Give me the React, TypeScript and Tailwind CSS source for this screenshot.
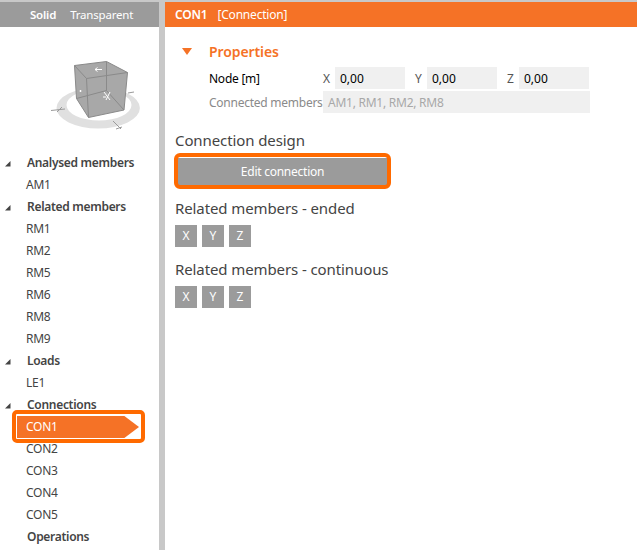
const font = "[font-family:'Noto_Sans','Open_Sans',sans-serif]";

function Cube() {
  return (
    <svg width="170" height="110" viewBox="0 30 170 110" className="block shrink-0">
      <path fillRule="evenodd" fill="#e0e0e0" d="M56.500 108a41.700 20.500 0 1 0 83.400 0a41.700 20.500 0 1 0 -83.400 0zM66.500 105a32.500 15.500 0 1 1 65 0a32.500 15.500 0 1 1 -65 0z" />
      <g stroke="#9a9a9a" strokeWidth="1" fill="none">
        <path d="M51 110.500 L65 109 M62 107 L57 112" />
        <path d="M113 121 L121 129 M116 129 L122 127" />
        <path d="M128 93 L134 92" />
      </g>
      <path d="M74.500 65.500 L106.500 61.500 L127.500 72.500 L124 110 L88.500 117.500 L76.500 98.500 Z" fill="#a8a8a8" stroke="#8a8a8a" strokeWidth="1" />
      <path d="M74.500 65.500 L86.500 78.500 L127.500 72.500 M86.500 78.500 L88.500 117.500 M76.500 98.500 L106.500 90.500 L124 110 M106.500 61.500 L106.500 90.500" fill="none" stroke="#8a8a8a" strokeWidth="1" />
      <path d="M95 69.500 L102 69.500 M95 69.500 L97.500 67.500 M95 69.500 L97.500 71.500" stroke="#fff" strokeWidth="1" fill="none" />
      <path d="M80.500 90 L80.500 92" stroke="#fff" strokeWidth="1.500" fill="none" />
      <path d="M104 92 L110 100 M110 92 L106 100 M103 97 L106 97" stroke="#fff" strokeWidth="1" fill="none" />
    </svg>
  );
}

function Caret() {
  return (
    <svg width="7" height="7" viewBox="0 0 7 7" className="ml-[4px] mr-[16px] shrink-0">
      <path d="M6.500 1 L6.500 6.500 L1 6.500 Z" fill="#444" />
    </svg>
  );
}

function Group({ label, caret = true }: { label: string; caret?: boolean }) {
  return (
    <div className="flex h-[22px] items-center text-[12px] font-semibold tracking-[-0.3px] text-[#444444]">
      {caret ? <Caret /> : <div className="w-[27px] shrink-0" />}
      <span>{label}</span>
    </div>
  );
}

function Item({ label }: { label: string }) {
  return <div className="flex h-[22px] items-center pl-[26px] text-[12px] tracking-[-0.25px] text-[#444444]">{label}</div>;
}

function Selected({ label }: { label: string }) {
  return (
    <div className="relative h-[22px]">
      <div className="absolute left-[12px] top-[-6px] h-[33px] w-[133px] rounded-[5px] border-[4px] border-[#ff6a00]" />
      <div className="absolute left-[17px] top-0 flex h-[22px] w-[122px] items-center bg-[#f57226] pl-[9px] text-[12px] tracking-[-0.25px] text-white [clip-path:polygon(0_0,88%_0,100%_50%,88%_100%,0_100%)]">
        {label}
      </div>
    </div>
  );
}

function Field({ axis }: { axis: string }) {
  return (
    <div className="flex items-center">
      <span className="w-[12px] pt-[1px] text-[12px] text-[#555555]">{axis}</span>
      <div className="flex h-[22px] w-[70px] items-center bg-[#f0f0f0] pl-[5px] pt-[1px] text-[12px] text-black">0,00</div>
    </div>
  );
}

function Axis() {
  return (
    <div className="flex gap-[5px]">
      {["X", "Y", "Z"].map((a) => (
        <div key={a} className="flex h-[22px] w-[22px] items-center justify-center bg-[#9b9b9b] text-[12px] text-white">
          {a}
        </div>
      ))}
    </div>
  );
}

export default function App() {
  return (
    <div className={`flex h-[550px] w-[637px] flex-col overflow-hidden bg-white ${font}`}>
      <div className="h-[2px] shrink-0 bg-[#c8c8c8]" />
      <div className="flex min-h-0 flex-1">
        <div className="w-[159px] shrink-0">
          <div className="flex h-[25px] items-center bg-[#9b9b9b] pl-[30px] text-[11.500px] tracking-[-0.2px] text-white">
            <span className="font-semibold">Solid</span>
            <span className="ml-[14px]">Transparent</span>
          </div>
          <div className="h-[3px]" />
          <Cube />
          <div className="h-[12px]" />
          <Group label="Analysed members" />
          <Item label="AM1" />
          <Group label="Related members" />
          {["RM1", "RM2", "RM5", "RM6", "RM8", "RM9"].map((r) => (
            <Item key={r} label={r} />
          ))}
          <Group label="Loads" />
          <Item label="LE1" />
          <Group label="Connections" />
          <Selected label="CON1" />
          {["CON2", "CON3", "CON4", "CON5"].map((r) => (
            <Item key={r} label={r} />
          ))}
          <Group label="Operations" caret={false} />
        </div>
        <div className="w-[6px] shrink-0 bg-[#c8c8c8]" />
        <div className="min-w-0 flex-1">
          <div className="flex h-[25px] items-center bg-[#f57226] pl-[10px] text-[12px] tracking-[-0.2px] text-white">
            <span className="font-semibold">CON1</span>
            <span className="ml-[10px]">[Connection]</span>
          </div>
          <div className="pl-[17px] pt-[12px]">
            <div className="flex h-[24px] items-center">
              <svg width="10" height="7" viewBox="0 0 10 7" className="shrink-0">
                <path d="M0 0 L10 0 L5 7 Z" fill="#f57226" />
              </svg>
              <span className="ml-[17px] text-[14px] font-semibold tracking-[-0.1px] text-[#f57226]">Properties</span>
            </div>
            <div className="ml-[27px] mt-[4px] flex h-[22px] items-center">
              <span className="w-[114px] pt-[1px] text-[12px] tracking-[-0.25px] text-black">Node [m]</span>
              <Field axis="X" />
              <div className="w-[10px]" />
              <Field axis="Y" />
              <div className="w-[10px]" />
              <Field axis="Z" />
            </div>
            <div className="ml-[27px] mt-[2px] flex h-[22px] items-center">
              <span className="w-[114px] whitespace-nowrap pt-[1px] text-[12px] tracking-[-0.25px] text-[#8a8a8a]">Connected members</span>
              <div className="flex h-[22px] w-[267px] items-center bg-[#f0f0f0] pl-[5px] pt-[1px] text-[12px] tracking-[-0.25px] text-[#a8a8a8]">
                AM1, RM1, RM2, RM8
              </div>
            </div>
          </div>
          <div className="pl-[10px]">
            <div className="mt-[16px] flex h-[22px] items-center text-[15px] tracking-[-0.1px] text-[#444444]">Connection design</div>
            <div className="relative ml-[3px] mt-[7px] flex h-[27px] w-[209px] items-center justify-center bg-[#9b9b9b] text-[12px] tracking-[-0.25px] text-white">
              <div className="absolute left-[-4px] top-[-5px] h-[36px] w-[217px] rounded-[6px] border-[4px] border-[#ff6a00]" />
              Edit connection
            </div>
            <div className="mt-[12px] flex h-[22px] items-center text-[15px] tracking-[-0.1px] text-[#444444]">Related members - ended</div>
            <div className="mt-[6px]">
              <Axis />
            </div>
            <div className="mt-[11px] flex h-[22px] items-center text-[15px] tracking-[-0.1px] text-[#444444]">Related members - continuous</div>
            <div className="mt-[6px]">
              <Axis />
            </div>
          </div>
        </div>
      </div>
    </div>
  );
}
